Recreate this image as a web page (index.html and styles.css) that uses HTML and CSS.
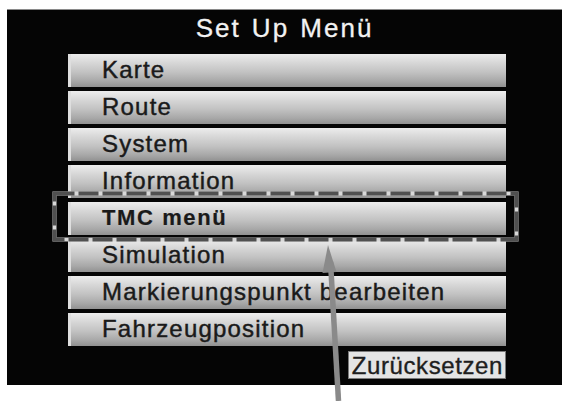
FILE: index.html
```html
<!DOCTYPE html>
<html lang="de">
<head>
<meta charset="utf-8">
<title>Set Up Menü</title>
<link rel="stylesheet" href="styles.css">
</head>
<body>
<div class="page">
  <div class="screen">
    <div class="title">Set Up Menü</div>
    <ul class="menu">
      <li class="item">Karte</li>
      <li class="item">Route</li>
      <li class="item">System</li>
      <li class="item">Information</li>
      <li class="item item-focus">TMC menü</li>
      <li class="item">Simulation</li>
      <li class="item">Markierungspunkt bearbeiten</li>
      <li class="item">Fahrzeugposition</li>
    </ul>
    <div class="footer">
      <div class="reset">Zurücksetzen</div>
    </div>
  </div>
  <svg class="focus-ring" width="467" height="52" viewBox="0 0 467 52">
    <rect x="2.5" y="2.5" width="462" height="46" fill="none" stroke="#d8d8d8" stroke-width="4"/>
    <rect x="2.5" y="2.5" width="462" height="46" fill="none" stroke="#505050" stroke-width="4" stroke-dasharray="20 4"/>
  </svg>
  <svg class="arrow" width="565" height="401" viewBox="0 0 565 401">
    <line x1="338.5" y1="401" x2="330.5" y2="262" stroke="#8a8a8a" stroke-width="5.5"/>
    <polygon points="328,245 322.5,273 336.5,272" fill="#8a8a8a"/>
  </svg>
</div>
</body>
</html>
```
FILE: styles.css
```css
html, body {
  margin: 0;
  padding: 0;
  background: #ffffff;
}

.page {
  position: relative;
  width: 565px;
  height: 401px;
  overflow: hidden;
  padding-top: 9px;
  box-sizing: border-box;
  font-family: "Liberation Sans", Arial, sans-serif;
}

.screen {
  margin-left: 7px;
  width: 555px;
  height: 376px;
  background: #050505;
  border-top: 1px solid #8a8a8a;
  box-sizing: border-box;
  display: flex;
  flex-direction: column;
}

.title {
  height: 44px;
  line-height: 37px;
  padding-bottom: 7px;
  box-sizing: border-box;
  text-align: center;
  color: #f2f2f2;
  font-size: 26px;
  letter-spacing: 2px;
  word-spacing: 2px;
  -webkit-text-stroke: 0.3px #f2f2f2;
}

.menu {
  list-style: none;
  margin: 0 0 0 61px;
  padding: 0;
  width: 438px;
  display: flex;
  flex-direction: column;
  gap: 4px;
}

.item {
  height: 33px;
  line-height: 32px;
  padding-left: 34px;
  font-size: 24px;
  letter-spacing: 1.2px;
  color: #1a1a1a;
  -webkit-text-stroke: 0.45px #1a1a1a;
  background: linear-gradient(to bottom, #ededed 0%, #d6d6d6 28%, #c2c2c2 55%, #a8a8a8 82%, #919191 100%);
  box-shadow: inset 3px 0 0 #dedede;
  white-space: nowrap;
}

.item-focus {
  font-weight: bold;
  font-size: 22px;
  letter-spacing: 1.6px;
  -webkit-text-stroke: 0.2px #1a1a1a;
}

.footer {
  display: flex;
  justify-content: flex-end;
  padding-right: 56px;
  margin-top: 5px;
}

.reset {
  height: 28px;
  line-height: 27px;
  padding: 0 2px 0 3px;
  background: #e4e4e4;
  border: 1px solid #7a7a7a;
  box-sizing: border-box;
  font-size: 24px;
  letter-spacing: 0.6px;
  color: #1e1e1e;
  -webkit-text-stroke: 0.35px #1e1e1e;
}

.focus-ring {
  position: absolute;
  left: 52px;
  top: 191px;
  pointer-events: none;
}

.arrow {
  position: absolute;
  left: 0;
  top: 0;
  pointer-events: none;
}
```
